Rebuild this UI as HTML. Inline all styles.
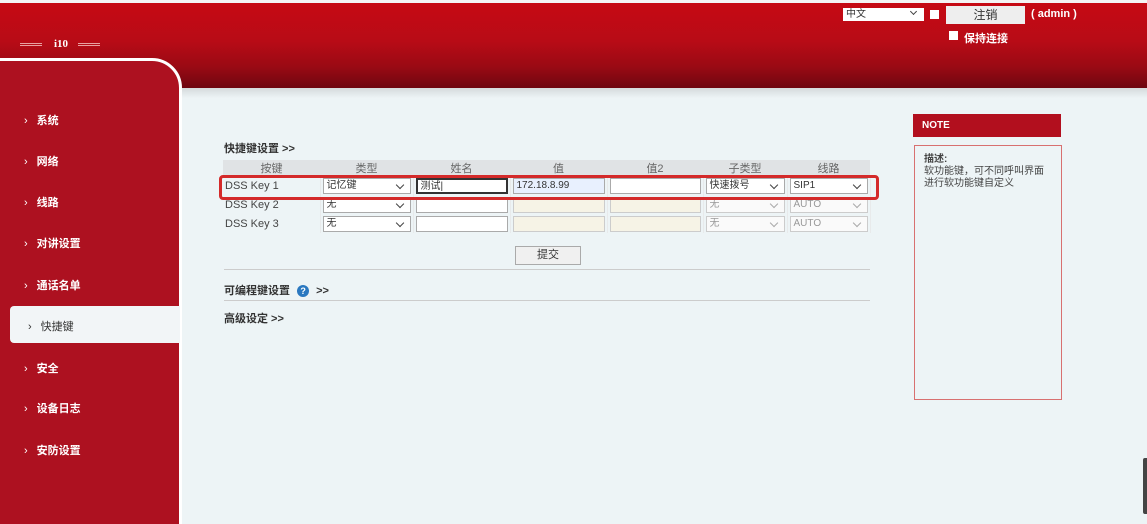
<!DOCTYPE html>
<html><head><meta charset="utf-8"><style>
*{margin:0;padding:0;box-sizing:border-box}
html,body{width:1147px;height:524px;overflow:hidden}
body{background:#edf4f6;font-family:"Liberation Sans","Noto Sans CJK SC",sans-serif;font-size:11px;color:#333;position:relative}
.hdr{position:absolute;left:0;top:3px;width:1147px;height:85px;background:linear-gradient(#c60a14 0%,#b80b16 45%,#9a0a14 75%,#6e0610 100%)}
.top{position:absolute;left:0;top:0;width:1147px;height:3px;background:#f4f4f4}
.shadow{position:absolute;left:180px;top:88px;width:967px;height:10px;background:linear-gradient(#d5dadc,#edf4f6)}
.logo{position:absolute;left:20px;top:38px;color:#fff;font:bold 11px "Liberation Serif",serif}
.side{position:absolute;left:-4px;top:58px;width:186px;height:480px;background:#ad1120;border:3px solid #fff;border-radius:0 30px 0 0}
.nav{position:absolute;left:24px;color:#fff;font-weight:bold;font-size:11px}
.nav:before{content:"›";margin-right:9px;font-weight:normal}
.act{position:absolute;left:10px;top:306px;width:170px;height:37px;background:#f2f5f7;border-radius:4px 0 0 4px}
.abs{position:absolute}
table{position:absolute;left:223px;top:160px;border-collapse:collapse}
th{height:16px;background:#e0e3e5;color:#666;font-weight:normal;font-size:11px}
td{height:19px;border-right:1px solid #e8eaeb;padding:1px 2px}
.sel,.inp{display:block;height:16px;border:1px solid #aaa;background:#fff;font-size:10px;line-height:14px;padding-left:3px;position:relative}
.sel:after{content:"";position:absolute;right:7px;top:3px;width:5px;height:5px;border-right:1.5px solid #444;border-bottom:1.5px solid #444;transform:rotate(45deg)}
.dis{border-color:#ccc;color:#999;background:#fafafa}
.dis:after{border-color:#aaa}
.beige{background:#f6f3e6;border-color:#ccc}
</style></head><body>
<div class="top"></div><div class="hdr"></div>
<div class="shadow"></div>
<div class="logo"><span style="display:inline-block;width:22px;border-top:3px double #e8a0a0;vertical-align:middle;margin-right:12px"></span>i10<span style="display:inline-block;width:22px;border-top:3px double #e8a0a0;vertical-align:middle;margin-left:10px"></span></div>
<div class="abs" style="left:843px;top:8px;width:81px;height:13px;background:#fff;font-size:10px;padding-left:3px;line-height:13px">中文</div>
<div class="abs" style="left:911px;top:9px;width:5px;height:5px;border-right:1.5px solid #444;border-bottom:1.5px solid #444;transform:rotate(45deg)"></div>
<div class="abs" style="left:930px;top:10px;width:9px;height:9px;background:#fff"></div>
<div class="abs" style="left:946px;top:6px;width:79px;height:18px;background:#eee;text-align:center;line-height:18px;font-size:12px;color:#333">注销</div>
<div class="abs" style="left:1031px;top:8px;color:#fff;font-weight:bold;font-size:11px">( admin )</div>
<div class="abs" style="left:949px;top:31px;width:9px;height:9px;background:#fff"></div>
<div class="abs" style="left:964px;top:30px;color:#fff;font-weight:bold;font-size:11px">保持连接</div>
<div class="side"></div>
<div class="act"></div>
<div class="nav" style="top:112px">系统</div>
<div class="nav" style="top:153px">网络</div>
<div class="nav" style="top:194px">线路</div>
<div class="nav" style="top:235px">对讲设置</div>
<div class="nav" style="top:277px">通话名单</div>
<div class="nav" style="top:318px;color:#333;left:28px;font-weight:normal">快捷键</div>
<div class="nav" style="top:360px">安全</div>
<div class="nav" style="top:400px">设备日志</div>
<div class="nav" style="top:442px">安防设置</div>

<div class="abs" style="left:224px;top:140px;font-weight:bold;color:#333">快捷键设置 &gt;&gt;</div>
<table>
<tr><th style="width:97px">按键</th><th style="width:93px">类型</th><th style="width:97px">姓名</th><th style="width:97px">值</th><th style="width:96px">值2</th><th style="width:84px">子类型</th><th style="width:83px">线路</th></tr>
<tr><td style="color:#444">DSS Key 1</td><td><span class="sel">记忆键</span></td><td><span class="inp" style="border:2px solid #333">测试|</span></td><td><span class="inp" style="background:#e8f0fe">172.18.8.99</span></td><td><span class="inp"></span></td><td><span class="sel">快速拨号</span></td><td><span class="sel">SIP1</span></td></tr>
<tr><td style="color:#444">DSS Key 2</td><td><span class="sel">无</span></td><td><span class="inp"></span></td><td><span class="inp beige"></span></td><td><span class="inp beige"></span></td><td><span class="sel dis">无</span></td><td><span class="sel dis">AUTO</span></td></tr>
<tr><td style="color:#444">DSS Key 3</td><td><span class="sel">无</span></td><td><span class="inp"></span></td><td><span class="inp beige"></span></td><td><span class="inp beige"></span></td><td><span class="sel dis">无</span></td><td><span class="sel dis">AUTO</span></td></tr>
</table>
<div class="abs" style="left:219px;top:175px;width:660px;height:25px;border:3px solid #d42a2a;border-radius:4px"></div>
<div class="abs" style="left:515px;top:246px;width:66px;height:19px;border:1px solid #aaa;background:#f0f0f0;text-align:center;line-height:17px;font-size:11px">提交</div>
<div class="abs" style="left:224px;top:269px;width:646px;border-top:1px solid #ccc"></div>
<div class="abs" style="left:224px;top:282px;font-weight:bold">可编程键设置 <span style="display:inline-block;width:12px;height:12px;border-radius:50%;background:#2a78c0;color:#fff;font-size:9px;text-align:center;line-height:12px;margin:0 4px">?</span> &gt;&gt;</div>
<div class="abs" style="left:224px;top:300px;width:646px;border-top:1px solid #ccc"></div>
<div class="abs" style="left:224px;top:310px;font-weight:bold">高级设定 &gt;&gt;</div>

<div class="abs" style="left:913px;top:114px;width:148px;height:23px;background:#b20f1e;color:#fff;font-weight:bold;font-size:10px;padding:6px 9px">NOTE</div>
<div class="abs" style="left:914px;top:145px;width:148px;height:255px;border:1px solid #d87070;padding:8px 9px;font-size:10px;line-height:12px;color:#444"><b>描述:</b><br>软功能键，可不同呼叫界面进行软功能键自定义</div>
<div class="abs" style="left:1143px;top:458px;width:4px;height:56px;background:#444;border-radius:2px 0 0 2px"></div>
</body></html>
